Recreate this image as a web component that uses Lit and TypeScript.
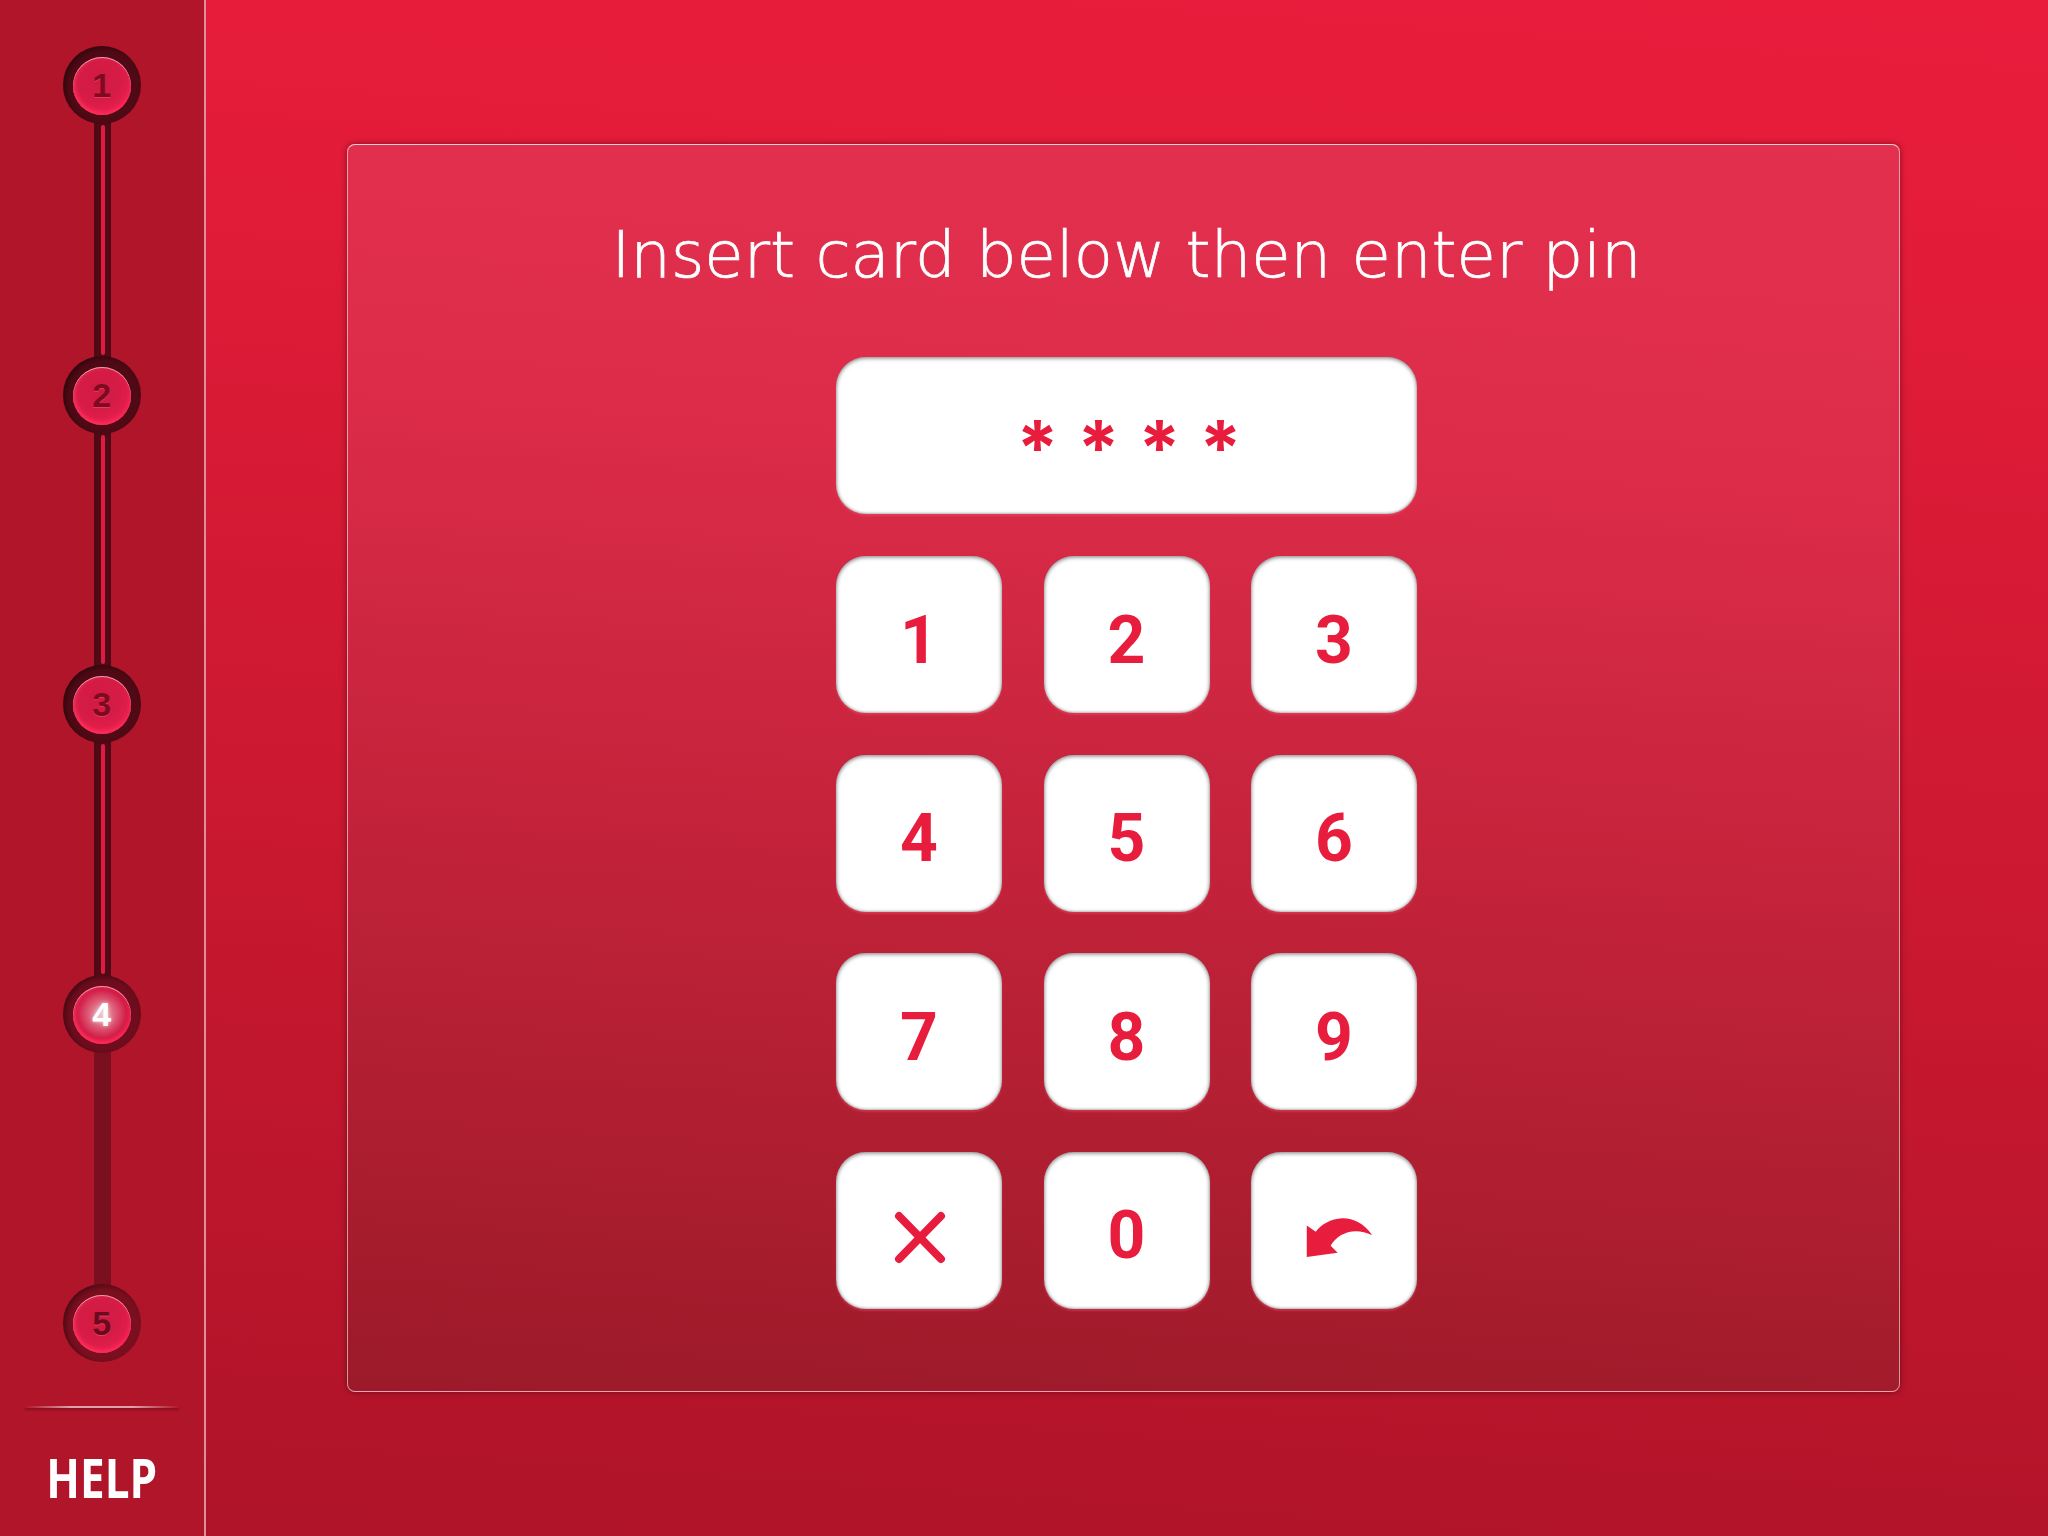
import { LitElement, html, css, svg } from "lit";
import { customElement } from "lit/decorators.js";
import { classMap } from "lit/directives/class-map.js";

const X_ICON = svg`<line x1="63" y1="64" x2="105" y2="107"/><line x1="105" y1="64" x2="63" y2="107"/>`;
const UNDO_ICON = svg`<path d="M198 256 L198 351 L291 338 L270 317 C 290 280 340 258 395 285 C 370 248 335 233 305 234 C 270 236 242 252 225 275 Z"/>`;

@customElement("app-root")
export class AppRoot extends LitElement {
  static styles = css`
    :host { display: block; width: 2048px; height: 1536px; overflow: hidden; font-family: "Liberation Sans", sans-serif; }
    .screen { display: flex; width: 2048px; height: 1536px; background: linear-gradient(184deg, #e91c3c 0%, #e51c3a 12%, #c7182f 60%, #ae1328 100%); }

    .side { box-sizing: border-box; width: 206px; height: 1536px; flex: none; background: #b0152a; border-right: 2px solid #dc8f9c; display: flex; flex-direction: column; align-items: center; padding: 46px 1px 0 0; }
    .step { box-sizing: border-box; flex: none; width: 78px; height: 78px; border-radius: 50%; display: flex; align-items: center; justify-content: center; background: #500a15; box-shadow: inset 3px 2px 5px rgba(0,0,0,.35); position: relative; z-index: 1; }
    .step.todo { background: #7a0f1f; }
    .step.cur { background: #6f0d1e; }
    .ball { box-sizing: border-box; width: 58px; height: 58px; border-radius: 50%; margin: 2.5px 0 0 .5px; padding-bottom: 2px; display: flex; align-items: center; justify-content: center; background: radial-gradient(circle at 45% 38%, #d01a42 0%, #d61c46 45%, #e81f4d 72%, #ff2a58 100%); box-shadow: inset 0 1px 0 rgba(255,255,255,.55), inset 2px 0 4px rgba(255,70,110,.4), inset 0 -3px 4px #ff2a58; color: #7e0a20; font-weight: 700; font-size: 34px; line-height: 1; text-shadow: 0 1px 0 rgba(255,90,120,.5); }
    .cur .ball { color: #fff; background: radial-gradient(circle at 50% 48%, #eab8c2 0%, #e0768c 22%, #d31d47 58%, #e41c48 80%, #ff2a58 100%); text-shadow: 0 0 4px rgba(255,255,255,.6); }
    .todo .ball { color: #6a0a1c; }
    .track { flex: none; box-sizing: border-box; width: 17px; height: 233.5px; margin: -1px 0 -1px 2px; background: #500a15; display: flex; justify-content: center; padding: 2px 0; }
    .track i { display: block; width: 4px; background: #e01a42; border-radius: 2px; }
    .track.todo { background: #7a0f1f; padding: 0; }
    .rule { flex: none; width: 154px; height: 2px; margin-top: 44px; background: linear-gradient(90deg, rgba(255,255,255,0), rgba(255,255,255,.6) 30%, rgba(255,255,255,.6) 70%, rgba(255,255,255,0)); box-shadow: 0 2px 2px rgba(60,0,10,.35); }
    .help { margin-top: 43px; color: #fff; font: 700 53px/53px "Open Sans", sans-serif; transform: scaleX(.83); }

    .main { flex: 1; padding: 144px 0 0 141px; }
    .panel { box-sizing: border-box; width: 1553px; height: 1248px; border-radius: 8px; background: linear-gradient(184deg, #e3304f 0%, #dd2c4a 25%, #c5233b 55%, #a91d2e 85%, #9b1a2a 100%); border: 1px solid rgba(255,255,255,.55); border-top-color: rgba(255,255,255,.8); box-shadow: 0 0 6px rgba(70,0,15,.6); padding-left: 488px; }
    .title { width: 581px; margin-top: 72px; height: 77px; display: flex; justify-content: center; white-space: nowrap; color: #fff; font: 300 64px/77px "DejaVu Sans", sans-serif; -webkit-text-stroke: .7px #fff; }
    .display { box-sizing: border-box; margin-top: 63px; width: 581px; height: 157px; border-radius: 30px; background: #fff; box-shadow: inset 0 1px 4px rgba(0,0,0,.55), inset 0 -1px 2px rgba(0,0,0,.12), 0 2px 2px rgba(255,90,120,.35); display: flex; justify-content: center; color: #e81c3c; font: 700 76px/157px Inter, sans-serif; letter-spacing: 18.5px; padding: 12px 0 0 23.5px; }
    .keys { margin-top: 42px; width: 581px; display: grid; grid-template-columns: repeat(3, 166px); justify-content: space-between; row-gap: 41.6px; }
    .key { box-sizing: border-box; height: 157px; border-radius: 30px; background: #fff; box-shadow: inset 0 1px 4px rgba(0,0,0,.55), inset 0 -1px 2px rgba(0,0,0,.12), 0 2px 2px rgba(255,90,120,.35); display: flex; align-items: center; justify-content: center; color: #e81c3c; font: 700 66px/66px Roboto, sans-serif; padding-top: 12px; }
    .key.icon { padding: 0; }
    .key svg { display: block; width: 100%; height: 100%; }
    .x { fill: none; stroke: #e81c3c; stroke-width: 8; stroke-linecap: round; }
    .undo { fill: #e81c3c; }
  `;

  render() {
    const states = ["done", "done", "done", "cur", "todo"];
    const keys = ["1", "2", "3", "4", "5", "6", "7", "8", "9"];
    return html`
      <div class="screen">
        <aside class="side">
          ${states.map((s, i) => html`
            <div class=${classMap({ step: true, cur: s === "cur", todo: s === "todo" })}><div class="ball">${i + 1}</div></div>
            ${i < 4 ? html`<div class=${classMap({ track: true, todo: i === 3 })}>${i < 3 ? html`<i></i>` : ""}</div>` : ""}
          `)}
          <div class="rule"></div>
          <div class="help">HELP</div>
        </aside>
        <main class="main">
          <section class="panel">
            <div class="title">Insert card below then enter pin</div>
            <div class="display">****</div>
            <div class="keys">
              ${keys.map((k) => html`<div class="key">${k}</div>`)}
              <div class="key icon"><svg class="x" viewBox="0 0 166 157">${X_ICON}</svg></div>
              <div class="key">0</div>
              <div class="key icon"><svg class="undo" viewBox="30 36 500 470">${UNDO_ICON}</svg></div>
            </div>
          </section>
        </main>
      </div>
    `;
  }
}
